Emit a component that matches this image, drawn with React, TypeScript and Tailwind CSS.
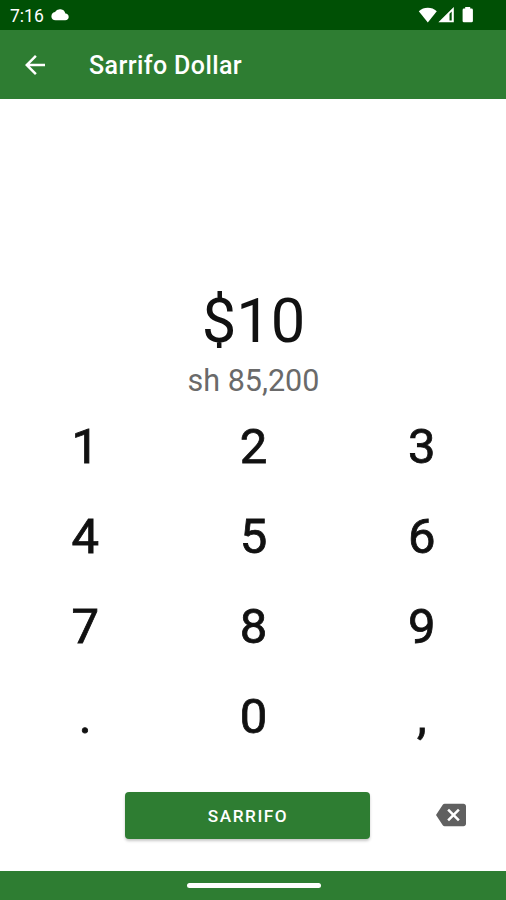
import React, { useState } from 'react';

const KEYS = ['1', '2', '3', '4', '5', '6', '7', '8', '9', '.', '0', ','];
const RATE = 8520;

const StatusBar: React.FC = () => (
  <div className="flex h-[30px] items-center justify-between bg-[#005005] pl-[10px] pr-[32px] text-white">
    <div className="flex items-center gap-[7px]">
      <span className="mt-[1px] text-[17.5px] leading-[30px]">7:16</span>
      <svg width="18" height="12" viewBox="0 0 18 12" fill="currentColor">
        <path d="M14.4 4.6A5.6 5.6 0 0 0 4 3.1 4.4 4.4 0 0 0 .4 7.4C.4 9.7 2 11.2 4.6 11.2h9.6c2.2 0 3.5-1.4 3.5-3.3s-1.4-3.2-3.3-3.3z" />
      </svg>
    </div>
    <div className="flex items-center">
      <svg width="20" height="16" viewBox="0 0 20 16" fill="currentColor">
        <path d="M.8 4.2C3.4 1.9 6.4.8 9.8.8s6.4 1.1 9 3.4L9.8 15.6z" />
      </svg>
      <svg className="-mt-[1px]" width="17" height="17" viewBox="0 0 17 17" fill="currentColor">
        <path fillRule="evenodd" d="M.4 16.3 15.8.9v15.4zM11.5 7.8v6.8h2.2V5.6z" />
      </svg>
      <svg className="-mt-[1px] ml-[7px]" width="12" height="17" viewBox="0 0 12 17" fill="currentColor">
        <path d="M3.2 2.5V1h5v1.5h1.3q1.4 0 1.4 1.4v11q0 1.4-1.4 1.4H2Q.6 16.3.6 14.9v-11Q.6 2.500 2 2.500z" />
      </svg>
    </div>
  </div>
);

const AppBar: React.FC = () => (
  <header className="flex h-[69px] items-center bg-[#2e7d32] pl-[20px] text-white">
    <button aria-label="Back">
      <svg width="30" height="30" viewBox="0 0 24 24" fill="currentColor">
        <path d="M20 11H7.83l5.59-5.59L12 4l-8 8 8 8 1.41-1.41L7.83 13H20v-2z" />
      </svg>
    </button>
    <h1 className="ml-[39px] mt-[3px] text-[25px] font-medium tracking-[0.4px]">Sarrifo Dollar</h1>
  </header>
);

export default function App() {
  const [amount, setAmount] = useState('10');

  const handlePress = (key: string) => setAmount(amount + key);
  const handleDelete = () => setAmount(amount.slice(0, -1));

  const converted = (Number(amount.replace(/,/g, '')) || 0) * RATE;

  return (
    <div className="flex h-[900px] w-[506px] flex-col overflow-hidden bg-white font-['Roboto',sans-serif]">
      <StatusBar />
      <AppBar />

      <main className="flex flex-1 flex-col">
        {/* Amount and its converted value */}
        <div className="flex h-[303px] flex-col items-center justify-end pl-[1px]">
          <div className="mb-[6px] text-[61.5px] leading-[72px] text-[#111]">${amount}</div>
          <div className="mb-[4px] text-[30.5px] leading-[35px] text-[#6a6a6a]">sh {converted.toLocaleString('en-US')}</div>
        </div>

        <div className="grid grid-cols-3 pl-[1px]">
          {KEYS.map(key => (
            <button
              key={key}
              onClick={() => handlePress(key)}
              className="h-[90px] text-[49px] leading-[90px] text-[#111] [-webkit-text-stroke:0.8px_#111]"
            >
              {key}
            </button>
          ))}
        </div>

        <div className="mt-[30px] flex items-start pl-[125px]">
          <button className="h-[47px] w-[245px] rounded-[4px] bg-[#2e7d32] pl-[1px] pt-[2px] text-[17.2px] font-medium tracking-[1.53px] text-white shadow-[0_2px_3px_rgba(0,0,0,0.22)]">
            SARRIFO
          </button>
          <button aria-label="Delete" onClick={handleDelete} className="ml-[66px] mt-[8px] text-[#606060]">
            <svg width="30" height="30" viewBox="0 0 24 24" fill="currentColor">
              <path d="M22 3H7c-.69 0-1.23.35-1.59.88L0 12l5.41 8.11c.36.53.9.89 1.59.89h15c1.1 0 2-.9 2-2V5c0-1.1-.9-2-2-2zm-3 12.59L17.59 17 14 13.41 10.41 17 9 15.59 12.59 12 9 8.41 10.41 7 14 10.59 17.59 7 19 8.41 15.41 12 19 15.59z" />
            </svg>
          </button>
        </div>
      </main>

      <footer className="flex h-[29px] justify-center bg-[#2e7d32] pl-[1px] pt-[12px]">
        <div className="h-[5px] w-[134px] rounded-full bg-white" />
      </footer>
    </div>
  );
}
